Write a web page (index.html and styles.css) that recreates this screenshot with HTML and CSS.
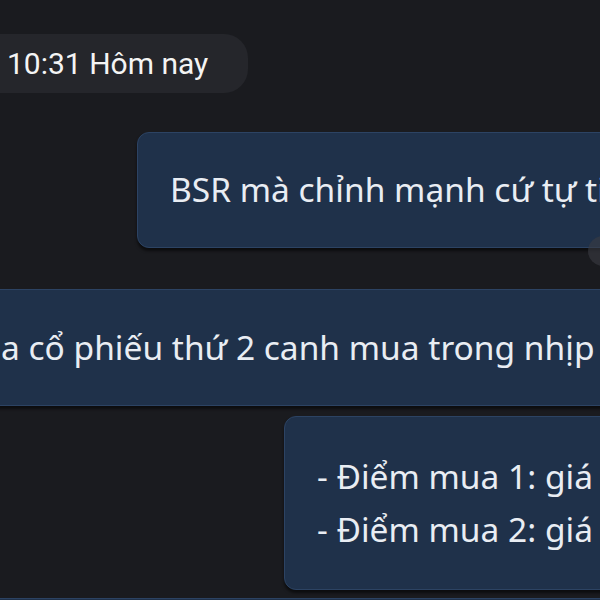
FILE: index.html
```html
<!DOCTYPE html>
<html lang="vi">
<head>
	<meta charset="UTF-8">
	<title>Tin nhắn</title>
	<link rel="stylesheet" href="styles.css">
</head>
<body>
<div class="chat">
	<div class="time-row">
		<span class="time-pill">10:31 Hôm nay</span>
	</div>

	<div class="row row-mine">
		<div class="bubble bubble-one">BSR mà chỉnh mạnh cứ tự tin</div>
		<span class="reaction"></span>
	</div>

	<div class="row row-wide">
		<div class="bubble bubble-two">a cổ phiếu thứ 2 canh mua trong nhịp</div>
	</div>

	<div class="row row-mine">
		<div class="bubble bubble-three">
			<p>- Điểm mua 1: giá</p>
			<p>- Điểm mua 2: giá</p>
		</div>
	</div>

	<div class="row row-wide">
		<div class="bubble bubble-next">&nbsp;</div>
	</div>
</div>
</body>
</html>
```

FILE: styles.css
```css
* {
	padding: 0;
	margin: 0;
	box-sizing: border-box;
}

html, body {
	width: 600px;
	height: 600px;
	overflow: hidden;
	background-color: #1a1b1f;
}

.chat {
	display: flex;
	flex-direction: column;
	padding-top: 34px;
	font-family: "Noto Sans", "Open Sans", sans-serif;
	color: #e9edf3;
}

.time-row {
	display: flex;
}

.time-pill {
	margin-left: -40px;
	padding: 0 40px 0 47px;
	height: 59px;
	line-height: 60px;
	border-radius: 24px;
	background-color: #25262b;
	color: #f4f4f4;
	font-family: Roboto, "Liberation Sans", sans-serif;
	font-size: 30px;
	white-space: nowrap;
}

.row {
	position: relative;
	display: flex;
	white-space: nowrap;
}

.bubble {
	background-color: #1f314a;
	border: 1px solid #2c4363;
	border-radius: 12px;
	box-shadow: 0 3px 3px rgba(0, 0, 0, .55);
	font-size: 33.5px;
	line-height: 53px;
	padding: 30px 0 31px 32px;
	flex-shrink: 0;
}

.bubble-one {
	margin: 39px 0 0 137px;
	width: 600px;
}

.reaction {
	position: absolute;
	left: 588px;
	bottom: -18px;
	width: 30px;
	height: 30px;
	border-radius: 50%;
	background-color: #3a3c42;
	opacity: .6;
}

.bubble-two {
	margin: 41px 0 0 -34px;
	width: 700px;
	padding-left: 34px;
	padding-top: 31px;
}

.bubble-three {
	margin: 10px 0 0 284px;
	width: 500px;
	padding-top: 33px;
	padding-bottom: 33px;
}

.bubble-next {
	margin: 8px 0 0 -20px;
	width: 700px;
	height: 80px;
}
```
